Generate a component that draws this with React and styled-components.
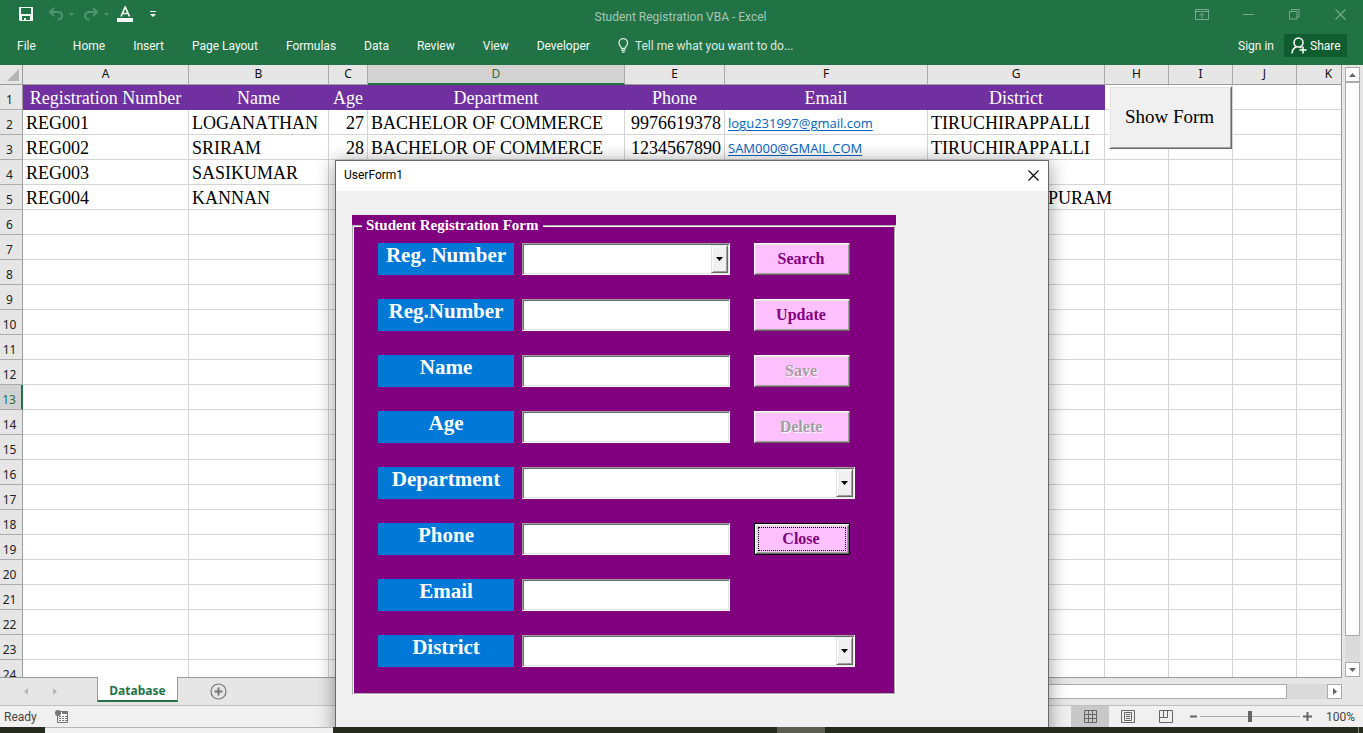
import React from "react";
import styled, { createGlobalStyle, css } from "styled-components";

const ui = 'Roboto, "Noto Sans", sans-serif';
const gridUi = '"Noto Sans", "Open Sans", sans-serif';
const mailUi = '"Open Sans", "Noto Sans", sans-serif';
const serif = '"Liberation Serif", "Times New Roman", serif';

const Global = createGlobalStyle`
  * { box-sizing: border-box; }
  body { margin: 0; overflow: hidden; font-family: ${ui}; font-size: 12px; }
  button, input, select { font: inherit; margin: 0; }
`;

const Desktop = styled.div`
  display: flex;
  flex-direction: column;
  height: 100vh;
  background: #262b1d;
`;

const ExcelWindow = styled.div`
  position: relative;
  flex: 1;
  min-height: 0;
  display: flex;
  flex-direction: column;
  overflow: hidden;
  background: #e6e6e6;
`;

/* Title bar */

const TitleBar = styled.header`
  flex: none;
  height: 32px;
  display: grid;
  grid-template-columns: 1fr auto 1fr;
  align-items: center;
  background: #217346;
  color: #a6c7b5;
`;

const QuickAccess = styled.div`
  display: flex;
  align-items: center;
  padding: 0 0 4px 18px;
  gap: 5px;
  height: 32px;
`;

const IconButton = styled.button`
  display: flex;
  align-items: center;
  justify-content: center;
  width: ${(p) => p.$w || 16}px;
  height: 20px;
  padding: 0;
  border: 0;
  background: none;
  color: ${(p) => p.$color || "#f4f8f5"};
  margin-left: ${(p) => p.$gap || 0}px;
`;

const WindowTitle = styled.h1`
  margin: 0;
  padding: 2px 2px 0 0;
  font-size: 12px;
  line-height: 16px;
  font-weight: 400;
`;

const WindowControls = styled.div`
  display: flex;
  justify-content: flex-end;
  align-items: center;
  height: 32px;
  gap: 30px;
  padding: 0 15px 4px 0;
`;

/* Ribbon */

const Ribbon = styled.nav`
  flex: none;
  height: 33px;
  display: flex;
  align-items: center;
  padding: 0 16px 6px 17px;
  background: #217346;
`;

const RibbonTab = styled.button`
  padding: 0;
  border: 0;
  background: none;
  color: #f4f8f5;
  line-height: 16px;
  white-space: nowrap;
  margin-right: ${(p) => (p.$file ? 37 : 28)}px;
`;

const TellMe = styled.button`
  display: flex;
  align-items: center;
  gap: 6px;
  padding: 0;
  border: 0;
  background: none;
  color: #dcebe2;
  line-height: 16px;
  white-space: nowrap;
`;

const Account = styled.div`
  margin-left: auto;
  display: flex;
  align-items: center;
  gap: 10px;
`;

const SignIn = styled.a`
  color: #f4f8f5;
  text-decoration: none;
`;

const ShareButton = styled.button`
  display: flex;
  align-items: center;
  gap: 3px;
  width: 63px;
  height: 23px;
  padding: 0 0 0 7px;
  border: 0;
  background: #0e5c2f;
  color: #fff;
`;

/* Worksheet */

const SheetArea = styled.main`
  flex: 1;
  min-height: 0;
  display: flex;
`;

const SheetView = styled.div`
  position: relative;
  flex: 1;
  min-width: 0;
  overflow: hidden;
  background: #fff;
  border-right: 1px solid #979c97;
`;

const Sheet = styled.table`
  table-layout: fixed;
  width: 1361px;
  border-collapse: separate;
  border-spacing: 0;
  font-family: ${gridUi};
`;

const ColumnHead = styled.th`
  height: 20px;
  padding: 0;
  font-weight: 400;
  line-height: 18px;
  text-align: center;
  vertical-align: top;
  color: ${(p) => (p.$active ? "#217346" : "#111")};
  background: ${(p) => (p.$active ? "#d2d2d2" : "#e6e6e6")};
  border-right: 1px solid #ababab;
  border-bottom: ${(p) => (p.$active ? "2px solid #217346" : "1px solid #9b9b9b")};
`;

const Corner = styled.td`
  height: 20px;
  padding: 0 3px 3px 0;
  line-height: 0;
  text-align: right;
  vertical-align: bottom;
  background: #e6e6e6;
  border-right: 1px solid #9b9b9b;
  border-bottom: 1px solid #9b9b9b;
`;

const RowHead = styled.th`
  height: 25px;
  padding: 0 3px 0 0;
  font-weight: 400;
  line-height: 18px;
  text-align: center;
  vertical-align: bottom;
  color: ${(p) => (p.$active ? "#217346" : "#222")};
  background: ${(p) => (p.$active ? "#d2d2d2" : "#e6e6e6")};
  border-right: ${(p) => (p.$active ? "2px solid #217346" : "1px solid #9b9b9b")};
  border-bottom: 1px solid #ababab;
`;

const Cell = styled.td`
  height: 25px;
  padding: 0 3px;
  font: 18px/22px ${serif};
  font-kerning: none;
  color: #000;
  white-space: nowrap;
  vertical-align: bottom;
  text-align: ${(p) => (p.$right ? "right" : "left")};
  border-right: 1px solid ${(p) => (p.$spill ? "transparent" : "#d4d4d4")};
  border-bottom: 1px solid #d4d4d4;
  ${(p) =>
    p.$heading &&
    css`
      padding: 0;
      text-align: center;
      color: #fff;
      background: #7030a0;
      border-color: #7030a0;
    `}
`;

const MailLink = styled.a`
  font: 13px/22px ${mailUi};
  color: #0563c1;
  text-decoration: underline;
  text-underline-offset: 2px;
`;

const bevel = css`
  border: 1px solid;
  border-color: #fff #696969 #696969 #fff;
  box-shadow: inset 1px 1px #e3e3e3, inset -1px -1px #a0a0a0;
`;

const ShowFormButton = styled.button`
  position: absolute;
  left: 1109px;
  top: 21px;
  width: 123px;
  height: 63px;
  padding: 0 2px 2px 0;
  background: #f0f0f0;
  color: #000;
  font: 19px/22px ${serif};
  ${bevel}
`;

const VScroll = styled.div`
  flex: none;
  width: 21px;
  padding: 2px 3px 0;
  display: flex;
  flex-direction: column;
`;

const ScrollArrow = styled.button`
  flex: none;
  display: flex;
  align-items: center;
  justify-content: center;
  width: 15px;
  height: 15px;
  padding: 0;
  background: #fff;
  border: 1px solid #ababab;
`;

const VTrack = styled.div`
  flex: 1;
  background: #dadada;
  padding-bottom: 26px;
`;

const VThumb = styled.div`
  height: 100%;
  background: #fff;
  border: 1px solid #ababab;
`;

/* Sheet tabs */

const TabBar = styled.div`
  flex: none;
  height: 28px;
  display: flex;
  align-items: flex-start;
`;

const TabStrip = styled.div`
  flex: 1;
  height: 28px;
  display: flex;
  background: linear-gradient(#979c97, #979c97) top / 100% 1px no-repeat;
`;

const TabNav = styled.div`
  display: flex;
  align-items: center;
  gap: 13px;
  width: 97px;
  height: 28px;
  padding-left: 18px;
`;

const SheetTab = styled.button`
  width: 81px;
  height: 25px;
  padding: 3px 0 0;
  background: #fff;
  border: 1px solid #979c97;
  border-width: 0 1px 2px;
  border-bottom-color: #217346;
  color: #217346;
  font-family: ${gridUi};
  font-weight: 700;
`;

const HScroll = styled.div`
  width: 441px;
  display: flex;
  margin: 7px 0 0 auto;
  height: 15px;
`;

const HTrack = styled.div`
  flex: 1;
  padding-right: 40px;
  background: #dadada;
`;

const HThumb = styled.div`
  height: 100%;
  background: #fff;
  border: 1px solid #ababab;
`;

/* Status bar */

const StatusBar = styled.footer`
  flex: none;
  height: 22px;
  display: flex;
  align-items: center;
  border-top: 1px solid #c0c0c0;
  background: #f0f0f0;
  padding: 0 8px 0 4px;
  color: #444;
`;

const MacroIcon = styled.span`
  display: flex;
  margin-left: 18px;
`;

const StatusRight = styled.div`
  margin-left: auto;
  display: flex;
  align-items: center;
`;

const ViewButton = styled.button`
  width: 38px;
  height: 21px;
  display: flex;
  align-items: center;
  justify-content: center;
  padding: 0;
  border: 0;
  background: ${(p) => (p.$active ? "#c8c8c8" : "none")};
`;

const ZoomSlider = styled.input`
  appearance: none;
  width: 100px;
  height: 12px;
  background: linear-gradient(#ababab, #ababab) center / 100% 1px no-repeat;
  &::-webkit-slider-thumb {
    appearance: none;
    width: 4px;
    height: 11px;
    background: #666;
  }
`;

const ZoomValue = styled.span`
  width: 31px;
  margin-left: 12px;
  text-align: right;
  line-height: 16px;
`;

const Taskbar = styled.div`
  flex: none;
  height: 6px;
  display: flex;
  padding-left: 45px;
  background: #262b1d;
`;

const TaskPreview = styled.div`
  width: 288px;
  background: #f0f0f0;
  border-top: 1px solid #b4b4b4;
`;

const TaskActive = styled.div`
  width: 48px;
  margin-left: 444px;
  background: #5b5e51;
`;

const TaskDivider = styled.div`
  width: 1px;
  margin: 0 4px 0 auto;
  background: #84877c;
`;

/* User form */

const FormWindow = styled.section`
  position: absolute;
  left: 335px;
  top: 160px;
  width: 714px;
  background: #f0f0f0;
  border: 1px solid #696969;
  box-shadow: 0 2px 18px rgba(0, 0, 0, 0.4);
  padding-bottom: 60px;
`;

const FormTitle = styled.div`
  height: 30px;
  display: flex;
  align-items: center;
  justify-content: space-between;
  padding: 0 9px 2px 8px;
  background: #fff;
  color: #000;
  line-height: 16px;
`;

const FramePanel = styled.form`
  width: 544px;
  margin: 24px 0 0 16px;
  background: #800080;
`;

const Frame = styled.fieldset`
  margin: 0;
  border: 2px groove #fff;
  padding: 6px 24px 26px;
  min-width: 0;
`;

const Legend = styled.legend`
  margin-left: -16px;
  padding: 0 4px 2px;
  color: #fff;
  font: 700 15px/20px ${serif};
  font-kerning: none;
`;

const Rows = styled.div`
  display: flex;
  flex-direction: column;
  gap: 24px;
`;

const Row = styled.div`
  display: flex;
  gap: 8px;
`;

const FieldLabel = styled.label`
  flex: none;
  width: 136px;
  height: 32px;
  background: #0078d7;
  color: #fff;
  text-align: center;
  font: 700 21px/25px ${serif};
`;

const sunken = css`
  border: 1px solid;
  border-color: #a0a0a0 #fff #fff #a0a0a0;
  border-radius: 0;
  box-shadow: inset 1px 1px #696969, inset -1px -1px #e3e3e3;
  background: #fff;
  outline: none;
`;

const TextInput = styled.input`
  width: 208px;
  height: 32px;
  padding: 2px 4px;
  ${sunken}
`;

const ComboBox = styled.div`
  position: relative;
  flex: none;
  width: ${(p) => (p.$wide ? 333 : 208)}px;
  height: 32px;
`;

const ComboSelect = styled.select`
  appearance: none;
  display: block;
  width: 100%;
  height: 100%;
  padding: 2px 20px 2px 4px;
  ${sunken}
`;

const ComboArrow = styled.span`
  position: absolute;
  top: 2px;
  right: 2px;
  bottom: 2px;
  width: 17px;
  display: flex;
  align-items: center;
  justify-content: center;
  pointer-events: none;
  background: #f0f0f0;
  border: 1px solid;
  border-color: #e3e3e3 #696969 #696969 #e3e3e3;
  box-shadow: inset 1px 1px #fff, inset -1px -1px #a0a0a0;
`;

const ActionButton = styled.button`
  width: 96px;
  height: 32px;
  margin-left: 16px;
  padding: 0 2px 0 0;
  background: #ffc0ff;
  color: #800080;
  font: 700 16px/20px ${serif};
  ${bevel}
  &:disabled {
    color: #a0a0a0;
    text-shadow: 1px 1px #fff;
  }
  ${(p) =>
    p.$focused &&
    css`
      border-color: #000;
      box-shadow: inset 1px 1px #fff, inset -1px -1px #696969, inset 2px 2px #e3e3e3,
        inset -2px -2px #a0a0a0;
      outline: 1px dotted #000;
      outline-offset: -5px;
    `}
`;

const CloseX = styled.button`
  display: flex;
  padding: 0;
  border: 0;
  background: none;
`;

/* Data */

const columns = [
  ["A", 166], ["B", 140], ["C", 39], ["D", 257], ["E", 100], ["F", 203],
  ["G", 177], ["H", 64], ["I", 64], ["J", 64], ["K", 64],
];

const headings = ["Registration Number", "Name", "Age", "Department", "Phone", "Email", "District"];

const records = [
  ["REG001", "LOGANATHAN", "27", "BACHELOR OF COMMERCE", "9976619378", "logu231997@gmail.com", "TIRUCHIRAPPALLI"],
  ["REG002", "SRIRAM", "28", "BACHELOR OF COMMERCE", "1234567890", "SAM000@GMAIL.COM", "TIRUCHIRAPPALLI"],
  ["REG003", "SASIKUMAR"],
  ["REG004", "KANNAN", "", "", "", "", "RAMANATHAPURAM"],
];

const rowNumbers = Array.from({ length: 24 }, (_, i) => i + 1);
const ribbonTabs = ["Home", "Insert", "Page Layout", "Formulas", "Data", "Review", "View", "Developer"];

const fields = [
  { id: "search-reg", label: "Reg. Number", combo: true, action: "Search" },
  { id: "reg", label: "Reg.Number", action: "Update" },
  { id: "name", label: "Name", action: "Save", disabled: true },
  { id: "age", label: "Age", action: "Delete", disabled: true },
  { id: "department", label: "Department", combo: true, wide: true },
  { id: "phone", label: "Phone", action: "Close", focused: true },
  { id: "email", label: "Email" },
  { id: "district", label: "District", combo: true, wide: true },
];

/* Icons */

const SaveIcon = () => (
  <svg width="14" height="14" viewBox="0 0 14 14" fill="currentColor">
    <path fillRule="evenodd" d="M0 0h14v14H1l-1-1zM2 1v6h10V1zM3 9v4h2v-2h2v2h4V9z" />
  </svg>
);

const UndoIcon = ({ flip }) => (
  <svg width="16" height="14" viewBox="0 0 16 14" fill="none" stroke="currentColor" strokeWidth="2">
    <g transform={flip ? "translate(16 0) scale(-1 1)" : undefined}>
      <path d="M6 1L2 5l4 4M2 5h7.500c3 0 4.500 1.500 4.500 3.800S12.500 12.500 9.500 12.500" />
    </g>
  </svg>
);

const Triangle = ({ dir = "down", w = 7, color = "currentColor" }) => {
  const h = Math.ceil(w / 2);
  const shape = {
    down: [w, h, `M0 0H${w}L${w / 2} ${h}z`],
    up: [w, h, `M0 ${h}H${w}L${w / 2} 0z`],
    right: [h, w, `M0 0V${w}L${h} ${w / 2}z`],
    left: [h, w, `M${h} 0V${w}L0 ${w / 2}z`],
  }[dir];
  return (
    <svg width={shape[0]} height={shape[1]} viewBox={`0 0 ${shape[0]} ${shape[1]}`} fill={color}>
      <path d={shape[2]} />
    </svg>
  );
};

const FontColorIcon = () => (
  <svg width="16" height="16" viewBox="0 0 16 16">
    <path d="M4 10.500L8.200 1L12.500 10.500M5.500 7.500h5.500" fill="none" stroke="currentColor" strokeWidth="1.700" />
    <path d="M0 12h16v4H0z" fill="currentColor" />
  </svg>
);

const CustomizeIcon = () => (
  <svg width="6" height="7" viewBox="0 0 6 7" fill="currentColor">
    <path d="M0 0h6v1H0zM0 3h6L3 6z" />
  </svg>
);

const BulbIcon = () => (
  <svg width="11" height="15" viewBox="0 0 11 15" fill="none" stroke="currentColor" strokeWidth="1.300">
    <path d="M3.500 10.500C3.500 8.500 1 7.500 1 4.900a4.300 4.300 0 0 1 8.600 0c0 2.600-2.500 3.600-2.500 5.600zM3.300 12.300h4M4 14.200h2.700" />
  </svg>
);

const PersonIcon = () => (
  <svg width="16" height="17" viewBox="0 0 16 17" fill="none" stroke="currentColor" strokeWidth="1.500">
    <circle cx="7.500" cy="5.500" r="4.500" />
    <path d="M1 16.500c.2-3.300 1.500-5.500 4.300-6.700M9.200 9.800l1.300 1M12 9.500v7M8.500 13h7" />
  </svg>
);

const RibbonOptionsIcon = () => (
  <svg width="14" height="11" viewBox="0 0 14 11" fill="none" stroke="currentColor">
    <path d="M.5.5h13v10H.5zM.5 2.500h13M7 9V4.500M4.800 6.500L7 4.300l2.200 2.200" />
  </svg>
);

const MinimizeIcon = () => (
  <svg width="11" height="10" viewBox="0 0 11 10" stroke="currentColor">
    <path d="M0 5.500h11" />
  </svg>
);

const RestoreIcon = () => (
  <svg width="11" height="11" viewBox="0 0 11 11" fill="none" stroke="currentColor">
    <path d="M.5 2.500h7.500v7.500H.5zM2.500 2.500V.5h7.500V8H8" />
  </svg>
);

const CrossIcon = ({ size = 11, color = "currentColor" }) => (
  <svg width={size} height={size} viewBox="0 0 11 11" stroke={color} strokeWidth="1.100">
    <path d="M.5.5l10 10M10.500.5l-10 10" />
  </svg>
);

const AddSheetIcon = () => (
  <svg width="17" height="17" viewBox="0 0 17 17" fill="none" stroke="#777">
    <circle cx="8.500" cy="8.500" r="7.500" strokeWidth="1.200" />
    <path d="M8.500 4.500v8M4.500 8.500h8" strokeWidth="2" />
  </svg>
);

const RecordIcon = () => (
  <svg width="13" height="13" viewBox="0 0 13 13">
    <path d="M3 1.500h9.500v11h-10V5" fill="#fff" stroke="#777" />
    <path d="M7 1h6v3H7z" fill="#777" />
    <path d="M4 6h2v1H4zM7 6h2v1H7zM10 6h2v1h-2zM4 8h2v1H4zM7 8h2v1H7zM10 8h2v1h-2zM4 10h2v1H4zM7 10h2v1H7zM10 10h2v1h-2z" fill="#777" />
    <circle cx="3" cy="3" r="3" fill="#777" />
  </svg>
);

const GridViewIcon = () => (
  <svg width="13" height="13" viewBox="0 0 13 13" fill="none" stroke="#666">
    <path d="M.5.5h12v12H.5zM4.500.5v12M8.500.5v12M.5 4.500h12M.5 8.500h12" />
  </svg>
);

const PageViewIcon = () => (
  <svg width="14" height="13" viewBox="0 0 14 13" fill="none" stroke="#666">
    <path d="M.5.5h13v12H.5zM3.500 2.500h7v8h-7zM5 4.500h4M5 6.500h4M5 8.500h4" />
  </svg>
);

const BreakViewIcon = () => (
  <svg width="14" height="13" viewBox="0 0 14 13" fill="none" stroke="#666">
    <path d="M.5.5h13v12H.5zM4.500.5v7M8.500.5v7H.5" />
  </svg>
);

const StepIcon = ({ plus }) => (
  <svg width={plus ? 9 : 7} height="9" viewBox={plus ? "0 0 9 9" : "0 0 7 9"} stroke="#666" strokeWidth="2">
    <path d={plus ? "M0 4.500h9M4.500 0v9" : "M0 4.500h7"} />
  </svg>
);

const StepButton = styled.button`
  display: flex;
  padding: 0;
  border: 0;
  background: none;
  margin: ${(p) => (p.$plus ? "0 0 0 3px" : "0 3px 0 5px")};
`;

const AddSheetButton = styled.button`
  display: flex;
  align-items: center;
  height: 28px;
  padding: 0;
  margin-left: 32px;
  border: 0;
  background: none;
`;

function SheetCell({ row, col }) {
  if (row === 1) {
    return col < 7 ? <Cell $heading>{headings[col]}</Cell> : <Cell />;
  }
  const value = records[row - 2]?.[col];
  if (!value) return <Cell />;
  if (col === 5) {
    return (
      <Cell>
        <MailLink href={`mailto:${value}`}>{value}</MailLink>
      </Cell>
    );
  }
  return (
    <Cell $right={col === 2 || col === 4} $spill={row === 5 && col === 6}>
      {value}
    </Cell>
  );
}

function Worksheet() {
  return (
    <SheetView>
      <Sheet>
        <colgroup>
          <col width="23" />
          {columns.map(([name, width]) => (
            <col key={name} width={width} />
          ))}
        </colgroup>
        <thead>
          <tr>
            <Corner>
              <svg width="12" height="12" viewBox="0 0 12 12" fill="#b4b4b4">
                <path d="M12 0v12H0z" />
              </svg>
            </Corner>
            {columns.map(([name]) => (
              <ColumnHead key={name} scope="col" $active={name === "D"}>
                {name}
              </ColumnHead>
            ))}
          </tr>
        </thead>
        <tbody>
          {rowNumbers.map((row) => (
            <tr key={row}>
              <RowHead scope="row" $active={row === 13}>
                {row}
              </RowHead>
              {columns.map(([name], col) => (
                <SheetCell key={name} row={row} col={col} />
              ))}
            </tr>
          ))}
        </tbody>
      </Sheet>
      <ShowFormButton type="button">Show Form</ShowFormButton>
    </SheetView>
  );
}

function UserForm() {
  return (
    <FormWindow role="dialog" aria-label="UserForm1">
      <FormTitle>
        <span>UserForm1</span>
        <CloseX type="button" aria-label="Close window">
          <CrossIcon color="#000" />
        </CloseX>
      </FormTitle>
      <FramePanel onSubmit={(e) => e.preventDefault()}>
        <Frame>
          <Legend>Student Registration Form</Legend>
          <Rows>
            {fields.map((f) => (
              <Row key={f.id}>
                <FieldLabel htmlFor={f.id}>{f.label}</FieldLabel>
                {f.combo ? (
                  <ComboBox $wide={f.wide}>
                    <ComboSelect id={f.id} />
                    <ComboArrow>
                      <Triangle />
                    </ComboArrow>
                  </ComboBox>
                ) : (
                  <TextInput id={f.id} type="text" />
                )}
                {f.action && (
                  <ActionButton type="button" disabled={f.disabled} $focused={f.focused}>
                    {f.action}
                  </ActionButton>
                )}
              </Row>
            ))}
          </Rows>
        </Frame>
      </FramePanel>
    </FormWindow>
  );
}

export default function App() {
  return (
    <Desktop>
      <Global />
      <ExcelWindow>
        <TitleBar>
          <QuickAccess>
            <IconButton aria-label="Save"><SaveIcon /></IconButton>
            <IconButton aria-label="Undo" $gap={9} $color="#4f9570"><UndoIcon /></IconButton>
            <IconButton aria-label="Undo list" $w={5} $color="#4f9570"><Triangle w={5} /></IconButton>
            <IconButton aria-label="Redo" $gap={4} $color="#4f9570"><UndoIcon flip /></IconButton>
            <IconButton aria-label="Redo list" $w={5} $color="#4f9570"><Triangle w={5} /></IconButton>
            <IconButton aria-label="Font color" $gap={3}><FontColorIcon /></IconButton>
            <IconButton aria-label="Customize toolbar" $gap={11} $w={8}><CustomizeIcon /></IconButton>
          </QuickAccess>
          <WindowTitle>Student Registration VBA - Excel</WindowTitle>
          <WindowControls>
            <IconButton aria-label="Ribbon options" $color="#7aab90"><RibbonOptionsIcon /></IconButton>
            <IconButton aria-label="Minimize" $color="#7aab90"><MinimizeIcon /></IconButton>
            <IconButton aria-label="Restore" $color="#7aab90"><RestoreIcon /></IconButton>
            <IconButton aria-label="Close" $color="#7aab90"><CrossIcon /></IconButton>
          </WindowControls>
        </TitleBar>
        <Ribbon>
          <RibbonTab $file>File</RibbonTab>
          {ribbonTabs.map((tab) => (
            <RibbonTab key={tab}>{tab}</RibbonTab>
          ))}
          <TellMe>
            <BulbIcon />
            Tell me what you want to do...
          </TellMe>
          <Account>
            <SignIn href="#sign-in">Sign in</SignIn>
            <ShareButton>
              <PersonIcon />
              Share
            </ShareButton>
          </Account>
        </Ribbon>
        <SheetArea>
          <Worksheet />
          <VScroll>
            <ScrollArrow aria-label="Scroll up"><Triangle dir="up" color="#666" /></ScrollArrow>
            <VTrack><VThumb /></VTrack>
            <ScrollArrow aria-label="Scroll down"><Triangle color="#666" /></ScrollArrow>
          </VScroll>
        </SheetArea>
        <TabBar>
          <TabStrip>
            <TabNav>
              <IconButton aria-label="Previous sheet" $color="#b8b8b8"><Triangle dir="left" /></IconButton>
              <IconButton aria-label="Next sheet" $color="#b8b8b8"><Triangle dir="right" /></IconButton>
            </TabNav>
            <SheetTab>Database</SheetTab>
            <AddSheetButton aria-label="New sheet"><AddSheetIcon /></AddSheetButton>
            <HScroll>
              <HTrack><HThumb /></HTrack>
              <ScrollArrow aria-label="Scroll right"><Triangle dir="right" color="#666" /></ScrollArrow>
            </HScroll>
          </TabStrip>
          <VScroll />
        </TabBar>
        <StatusBar>
          <span>Ready</span>
          <MacroIcon><RecordIcon /></MacroIcon>
          <StatusRight>
            <ViewButton $active aria-label="Normal view"><GridViewIcon /></ViewButton>
            <ViewButton aria-label="Page layout view"><PageViewIcon /></ViewButton>
            <ViewButton aria-label="Page break view"><BreakViewIcon /></ViewButton>
            <StepButton aria-label="Zoom out"><StepIcon /></StepButton>
            <ZoomSlider type="range" aria-label="Zoom" min="10" max="190" defaultValue="100" />
            <StepButton $plus aria-label="Zoom in"><StepIcon plus /></StepButton>
            <ZoomValue>100%</ZoomValue>
          </StatusRight>
        </StatusBar>
        <UserForm />
      </ExcelWindow>
      <Taskbar>
        <TaskPreview />
        <TaskActive />
        <TaskDivider />
      </Taskbar>
    </Desktop>
  );
}
